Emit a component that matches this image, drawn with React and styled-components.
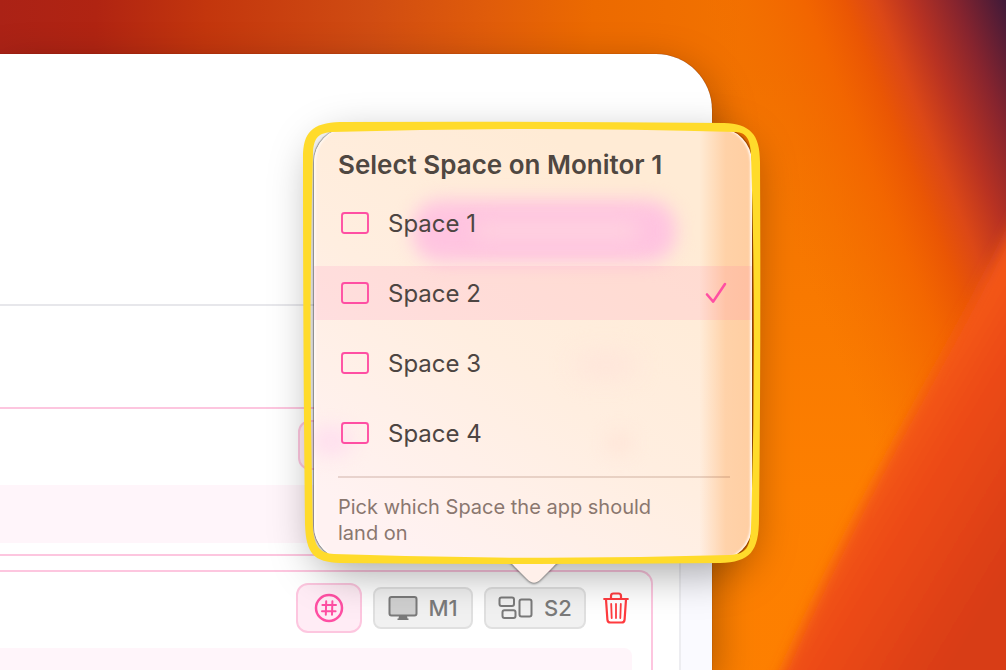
import React from 'react';
import { useState } from "react";
import styled, { createGlobalStyle } from 'styled-components';

const spaces = ["Space 1", "Space 2", "Space 3", "Space 4"];

function App() {

  const [selected, setSelected] = useState("Space 2");

  return (
    <>
      <GlobalStyle />
      <Desktop>
        <Wallpaper />
        <Window>
          <Header />
          <Body>
            <List>
              <Card>
                <Actions>
                  <HashButton aria-label="Shortcut"><HashIcon /></HashButton>
                  <ChipButton $width="98px" aria-label="Monitor"><MonitorIcon /></ChipButton>
                  <ChipButton $width="102px" aria-label="Space"><SpacesIcon /></ChipButton>
                  <TrashButton aria-label="Remove"><TrashIcon /></TrashButton>
                </Actions>
                <Panel />
              </Card>
              <Card $grow>
                <Actions>
                  <HashButton aria-label="Shortcut"><HashIcon /></HashButton>
                  <ChipButton $width="100px"><MonitorIcon />M1</ChipButton>
                  <Anchor>
                    <ChipButton $width="102px" aria-haspopup="dialog" aria-expanded="true">
                      <SpacesIcon />S2
                    </ChipButton>
                    <SpacePopover selected={selected} onSelect={setSelected} />
                  </Anchor>
                  <TrashButton aria-label="Remove"><TrashIcon /></TrashButton>
                </Actions>
                <Panel $grow />
              </Card>
            </List>
            <Track />
          </Body>
        </Window>
      </Desktop>
    </>
  )
}

function SpacePopover({ selected, onSelect }) {
  return (
    <Popover role="dialog" aria-labelledby="space-title">
      <Arrow />
      <Glass>
        <Blob $top="72px" $left="98px" $width="264px" $height="62px" $color="#ffc4e0" $blur="9px" />
        <Blob $top="92px" $left="160px" $width="165px" $height="22px" $color="#ffd0df" $blur="9px" />
        <Blob $top="226px" $left="262px" $width="60px" $height="22px" $color="#ffe4da" $blur="12px" />
        <Blob $top="298px" $left="-4px" $width="42px" $height="30px" $color="#ffe0ee" $blur="9px" />
        <Blob $top="304px" $left="292px" $width="26px" $height="22px" $color="#ffe5d8" $blur="9px" />
      </Glass>
      <Title id="space-title">Select Space on Monitor 1</Title>
      <Options>
        {spaces.map((space) => {
          return (
            <li key={space}>
              <Option
                $active={space === selected}
                aria-pressed={space === selected}
                onClick={() => { onSelect(space) }}>
                <RectIcon />
                <span>{space}</span>
                {space === selected && <CheckIcon />}
              </Option>
            </li>
          )
        })}
      </Options>
      <Divider />
      <Hint>Pick which Space the app should land on</Hint>
      <Marker />
    </Popover>
  )
}

function Wallpaper() {
  return (
    <WallpaperSvg viewBox="0 0 1006 670" preserveAspectRatio="none" aria-hidden="true">
      <defs>
        <linearGradient id="sky" gradientUnits="userSpaceOnUse" x1="0" y1="0" x2="740" y2="40">
          <stop offset="0" stopColor="#ab2216" />
          <stop offset="0.13" stopColor="#b02412" />
          <stop offset="0.28" stopColor="#c3360d" />
          <stop offset="0.5" stopColor="#d04c12" />
          <stop offset="0.66" stopColor="#e05c0a" />
          <stop offset="0.8" stopColor="#ec6a00" />
          <stop offset="1" stopColor="#f27200" />
        </linearGradient>
        <linearGradient id="glow" x1="0" y1="0" x2="0" y2="1">
          <stop offset="0.1" stopColor="#fe8000" stopOpacity="0" />
          <stop offset="0.75" stopColor="#fe8000" stopOpacity="0.95" />
        </linearGradient>
        <linearGradient id="night" gradientUnits="userSpaceOnUse" x1="696" y1="0" x2="962" y2="-106">
          <stop offset="0" stopColor="#f47000" stopOpacity="0" />
          <stop offset="0.35" stopColor="#f26200" stopOpacity="0.8" />
          <stop offset="0.48" stopColor="#ea5604" />
          <stop offset="0.58" stopColor="#dc4816" />
          <stop offset="0.7" stopColor="#b83222" />
          <stop offset="0.84" stopColor="#86242e" />
          <stop offset="1" stopColor="#421a38" />
        </linearGradient>
        <linearGradient id="ember" gradientUnits="userSpaceOnUse" x1="860" y1="480" x2="1010" y2="570">
          <stop offset="0" stopColor="#f65a14" />
          <stop offset="0.35" stopColor="#ec4a12" />
          <stop offset="1" stopColor="#d83c18" />
        </linearGradient>
        <filter id="soft" x="-20%" y="-20%" width="140%" height="140%">
          <feGaussianBlur stdDeviation="7" />
        </filter>
      </defs>
      <rect width="1006" height="670" fill="url(#sky)" />
      <rect width="1006" height="670" fill="url(#glow)" />
      <rect width="1006" height="670" fill="url(#night)" />
      <path d="M1040 170 C985 285 935 370 880 472 C840 548 810 610 770 700 H1060 V170 Z" fill="url(#ember)" filter="url(#soft)" />
    </WallpaperSvg>
  )
}

function Marker() {
  return (
    <MarkerSvg viewBox="300 118 464 450" aria-hidden="true">
      <path
        fill="#ffdb2b"
        fillRule="evenodd"
        d="M303 158 C303 132 312 123 340 122 Q530 121 724 123 C750 124 760 134 760 162 Q761 350 759 518 C759 552 750 562 720 563 Q530 565 340 563 C314 562 306 554 305 524 Q303 350 303 158 Z
           M313 152 C314 137 319 133 332 132 Q530 126 736 132 C746 133 750 138 751 154 Q757 340 751 528 C750 548 746 554 730 555 Q530 561 334 554 C320 553 315 547 313 530 Q308 340 313 152 Z"
      />
    </MarkerSvg>
  )
}

function Arrow() {
  return (
    <ArrowSvg width="56" height="30" viewBox="0 0 56 30" aria-hidden="true">
      <path d="M0 0 C5 2 7 5 10 8 L21 19 C26 24 30 24 35 19 L46 8 C49 5 51 2 56 0 Z" fill="#fff0ea" />
    </ArrowSvg>
  )
}

function HashIcon() {
  return (
    <svg width="30" height="30" viewBox="0 0 30 30" fill="none" stroke="#ff4fa3" strokeLinecap="round" aria-hidden="true">
      <circle cx="15" cy="15" r="13" strokeWidth="2.5" />
      <path d="M12.2 8.2 L11.8 21.8 M18.4 8.2 L18 21.8 M8.4 12 H22 M8 18.2 H21.6" strokeWidth="2" />
    </svg>
  )
}

function MonitorIcon() {
  return (
    <svg width="30" height="26" viewBox="0 0 30 26" aria-hidden="true">
      <path d="M11 21 H19 L19.5 23.4 H20.5 V25 H9.5 V23.4 H10.5 Z" fill="#7a7a7a" />
      <rect x="1.5" y="2" width="27" height="18.5" rx="2" fill="#d0d0d0" stroke="#7a7a7a" strokeWidth="2" />
    </svg>
  )
}

function SpacesIcon() {
  return (
    <svg width="36" height="26" viewBox="0 0 36 26" fill="none" stroke="#7a7a7a" strokeWidth="2" aria-hidden="true">
      <rect x="1.5" y="2.5" width="14.5" height="8.5" rx="2" />
      <rect x="4.5" y="15.2" width="13" height="7.8" rx="2" />
      <rect x="21.5" y="4.5" width="12" height="17" rx="2" />
    </svg>
  )
}

function TrashIcon() {
  return (
    <svg width="26" height="32" viewBox="0 0 26 32" fill="none" stroke="#ff3b3f" strokeWidth="2.2" strokeLinecap="round" strokeLinejoin="round" aria-hidden="true">
      <path d="M1.2 7 H24.8" />
      <path d="M8 6.5 V4 Q8 1.5 10.5 1.5 H15.5 Q18 1.5 18 4 V6.5" />
      <path d="M3 7.5 L4.4 27.6 Q4.6 30.5 7.5 30.5 H18.5 Q21.4 30.5 21.6 27.6 L23 7.5" />
      <path d="M8.2 12 L8.7 26 M13 12 V26 M17.8 12 L17.3 26" strokeWidth="1.8" />
    </svg>
  )
}

function RectIcon() {
  return (
    <svg width="30" height="24" viewBox="0 0 30 24" aria-hidden="true">
      <rect x="2" y="2" width="26" height="20" rx="2.5" fill="none" stroke="#ff4fa3" strokeWidth="1.9" />
    </svg>
  )
}

function CheckIcon() {
  return (
    <CheckSvg width="22" height="22" viewBox="0 0 22 22" aria-hidden="true">
      <path d="M2 12.5 L8.2 19.6 L20 2" fill="none" stroke="#ff4fa3" strokeWidth="2.6" strokeLinecap="round" strokeLinejoin="round" />
    </CheckSvg>
  )
}

const GlobalStyle = createGlobalStyle`
  *{
    box-sizing: border-box;
  }
  body{
    margin: 0;
    font-family: Inter, "Liberation Sans", sans-serif;
    -webkit-font-smoothing: antialiased;
  }
  button{
    font-family: inherit;
    margin: 0;
    cursor: pointer;
  }
`;

const Desktop = styled.main`
  position: relative;
  display: flex;
  min-height: 100vh;
  padding: 54px 294px 0 0;
  overflow: hidden;
  background: #f27200;
`;

const WallpaperSvg = styled.svg`
  position: absolute;
  inset: 0;
  width: 100%;
  height: 100%;
`;

const Window = styled.section`
  position: relative;
  flex: 1;
  display: flex;
  flex-direction: column;
  background: white;
  border-radius: 0 56px 0 0;
  box-shadow: 0 0 1px rgba(80, 20, 0, 0.8), 0 16px 44px rgba(0, 0, 0, 0.36);
`;

const Header = styled.header`
  height: 252px;
  border-bottom: 2px solid #e7e7eb;
`;

const Body = styled.div`
  flex: 1;
  display: flex;
`;

const List = styled.div`
  flex: 1;
  display: flex;
  flex-direction: column;
  gap: 14px;
  padding: 101px 26px 0 0;
`;

const Track = styled.div`
  width: 33px;
  background: #fafaff;
  border-left: 2px solid #ededf1;
`;

const Card = styled.article`
  display: flex;
  flex-direction: column;
  gap: 15px;
  flex: ${(props) => (props.$grow ? 1 : "none")};
  padding: 11px 19px ${(props) => (props.$grow ? "0" : "11px")} 0;
  border: 2px solid #fdc6df;
  border-left: none;
  border-bottom-width: ${(props) => (props.$grow ? "0" : "2px")};
  border-radius: 0 14px ${(props) => (props.$grow ? "0" : "14px")} 0;
`;

const Actions = styled.div`
  display: flex;
  justify-content: flex-end;
  align-items: center;
  gap: 11px;
  padding-right: 3px;
`;

const Panel = styled.div`
  flex: ${(props) => (props.$grow ? 1 : "none")};
  min-height: ${(props) => (props.$grow ? "22px" : "58px")};
  border-radius: 0 8px 0 0;
  background: #fff5fa;
`;

const HashButton = styled.button`
  display: grid;
  place-items: center;
  width: 66px;
  height: 50px;
  padding: 0;
  background: #ffecf5;
  border: 2px solid #fdc6df;
  border-radius: 12px;
`;

const ChipButton = styled.button`
  display: flex;
  align-items: center;
  justify-content: center;
  gap: 10px;
  width: ${(props) => props.$width};
  height: 42px;
  padding: 0;
  color: #7a7a7a;
  font-size: 22px;
  font-weight: 500;
  background: #f1f1f1;
  border: 2px solid #e0e0e0;
  border-radius: 8px;
`;

const TrashButton = styled.button`
  display: grid;
  place-items: center;
  margin-left: 6px;
  padding: 0;
  background: none;
  border: none;
`;

const Anchor = styled.div`
  position: relative;
`;

const Popover = styled.div`
  position: absolute;
  right: -166px;
  bottom: calc(100% + 27px);
  z-index: 2;
  display: flex;
  flex-direction: column;
  width: 438px;
  padding: 21px 0 14px;
  border-radius: 34px;
  box-shadow: 0 0 1px 1px rgba(0, 0, 0, 0.35), 0 12px 44px rgba(0, 0, 0, 0.36);
`;

const Glass = styled.div`
  position: absolute;
  inset: 0;
  overflow: hidden;
  border-radius: 34px;
  background:
    linear-gradient(90deg, rgba(255, 203, 156, 0) 88%, rgba(255, 203, 156, 0.8) 94%, rgba(255, 203, 156, 0.9)),
    linear-gradient(215deg, #ffebd5 20%, #ffeee0 55%, #fff2f2 90%);
  box-shadow: inset -2px 0 2px rgba(255, 255, 255, 0.8), inset 2px 0 2px rgba(255, 255, 255, 0.6);
`;

const Blob = styled.span`
  position: absolute;
  top: ${(props) => props.$top};
  left: ${(props) => props.$left};
  width: ${(props) => props.$width};
  height: ${(props) => props.$height};
  border-radius: 28px;
  background: ${(props) => props.$color};
  filter: blur(${(props) => props.$blur});
`;

const Title = styled.h2`
  position: relative;
  margin: 0 24px 15px;
  color: #4f4741;
  font-size: 26px;
  line-height: 32px;
  font-weight: 600;
  white-space: nowrap;
`;

const Options = styled.ul`
  position: relative;
  display: flex;
  flex-direction: column;
  gap: 16px;
  margin: 0;
  padding: 0;
  list-style: none;
`;

const Option = styled.button`
  display: flex;
  align-items: center;
  gap: 18px;
  width: 100%;
  height: 54px;
  padding: 0 25px 0 26px;
  color: #4d4542;
  font-size: 24px;
  font-weight: 400;
  background: ${(props) => (props.$active ? "rgba(255, 79, 163, 0.1)" : "none")};
  border: none;
`;

const CheckSvg = styled.svg`
  margin-left: auto;
`;

const Divider = styled.hr`
  position: relative;
  width: 392px;
  height: 2px;
  margin: 16px 24px;
  border: none;
  background: rgba(130, 70, 50, 0.18);
`;

const Hint = styled.p`
  position: relative;
  margin: 0 60px 0 24px;
  color: #8a776f;
  font-size: 20px;
  line-height: 26px;
`;

const MarkerSvg = styled.svg`
  position: absolute;
  top: -10px;
  left: -14px;
  width: 464px;
  height: 450px;
  pointer-events: none;
`;

const ArrowSvg = styled.svg`
  position: absolute;
  top: 100%;
  left: calc(50% - 27px);
  filter: drop-shadow(0 1px 1px rgba(0, 0, 0, 0.5));
`;

export default App;
